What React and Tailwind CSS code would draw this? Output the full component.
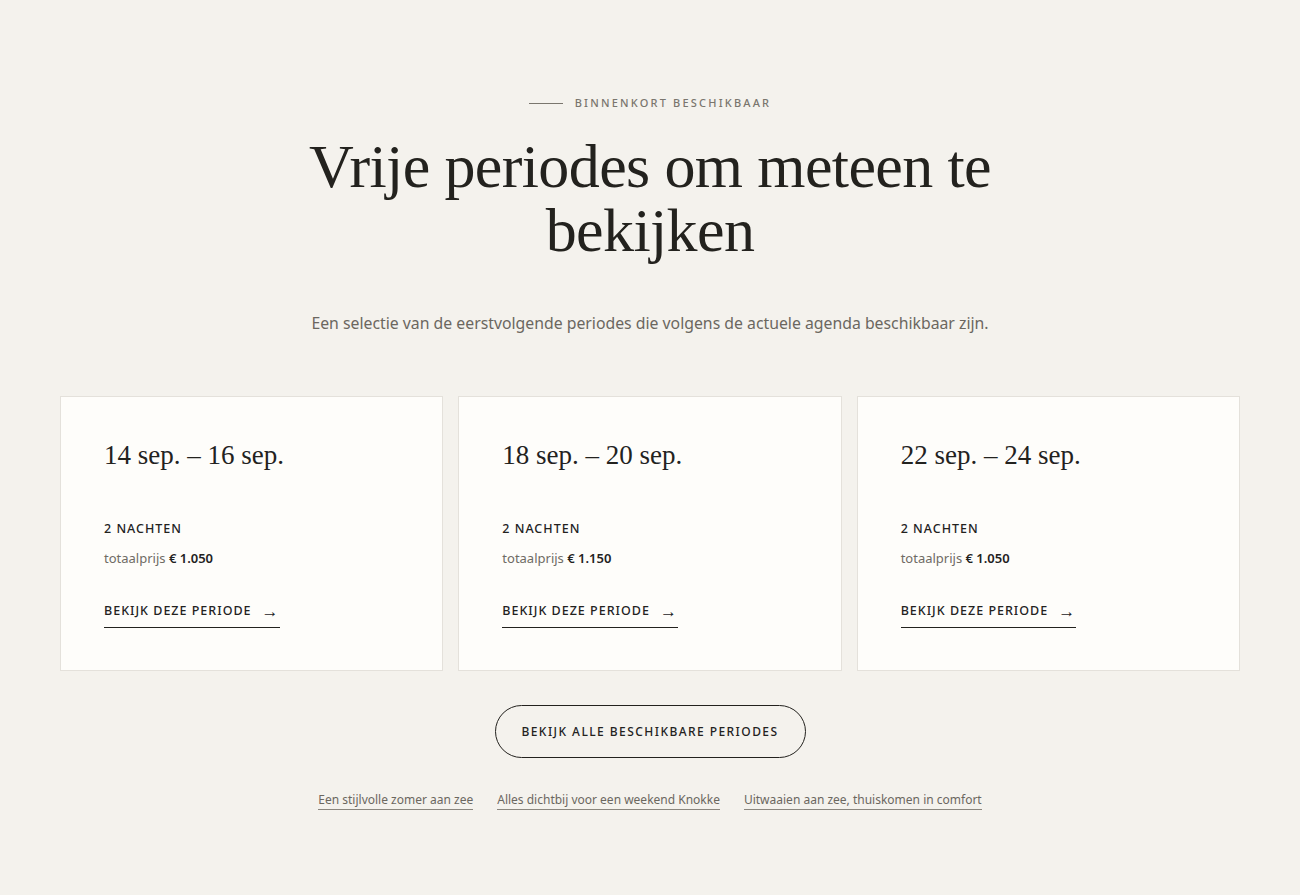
import React from 'react';

const PERIODS = [
  { id: 1, range: '14 sep. – 16 sep.', nights: '2 nachten', price: '€ 1.050' },
  { id: 2, range: '18 sep. – 20 sep.', nights: '2 nachten', price: '€ 1.150' },
  { id: 3, range: '22 sep. – 24 sep.', nights: '2 nachten', price: '€ 1.050' },
];

const LINKS = [
  'Een stijlvolle zomer aan zee',
  'Alles dichtbij voor een weekend Knokke',
  'Uitwaaien aan zee, thuiskomen in comfort',
];

const serif = { fontFamily: '"Liberation Serif", "DejaVu Serif", serif' };

const PeriodCard = ({ period }) => (
  <div className="bg-[#fefdfa] border border-[#e4e1db] px-[43px] pt-[42px] pb-[42px] flex flex-col">
    <h3 className="text-[27px] leading-[32px] text-[#23221e]" style={serif}>
      {period.range}
    </h3>
    <div className="mt-[50px] text-[12.5px] leading-[16px] font-medium uppercase tracking-[0.08em] text-[#23221e]">
      {period.nights}
    </div>
    <div className="mt-[13px] text-[13px] leading-[16px] text-[#6f6b64]">
      totaalprijs <span className="font-semibold text-[#23221e]">{period.price}</span>
    </div>
    <div className="mt-[31px]">
      <a
        href="#"
        className="inline-flex items-center gap-[10px] pb-[8px] border-b border-[#23221e] text-[12.5px] leading-[16px] font-medium uppercase tracking-[0.08em] text-[#23221e]"
      >
        Bekijk deze periode
        <span className="text-[17px] leading-[16px]">→</span>
      </a>
    </div>
  </div>
);

export default function App() {
  return (
    <div
      className="min-h-[895px] bg-[#f4f2ed] text-[#23221e]"
      style={{ fontFamily: '"Noto Sans", "Liberation Sans", sans-serif' }}
    >
      <section className="pt-[96px] pb-[80px] flex flex-col items-center">
        {/* Eyebrow */}
        <div className="flex items-center gap-[12px]">
          <span className="block w-[34px] h-px bg-[#7a766e]" />
          <span className="text-[11px] leading-[14px] font-medium uppercase tracking-[0.2em] text-[#7a766e]">
            Binnenkort beschikbaar
          </span>
        </div>

        {/* Heading */}
        <h1
          className="mt-[24px] max-w-[780px] text-center text-[62px] leading-[64px] tracking-[-0.01em] text-[#23221e]"
          style={serif}
        >
          Vrije periodes om meteen te bekijken
        </h1>

        <p className="mt-[49px] text-[15.8px] leading-[24px] text-[#6b675f]">
          Een selectie van de eerstvolgende periodes die volgens de actuele agenda beschikbaar zijn.
        </p>

        {/* Cards */}
        <div className="mt-[61px] w-[1180px] grid grid-cols-3 gap-[15px]">
          {PERIODS.map((p) => (
            <PeriodCard key={p.id} period={p} />
          ))}
        </div>

        {/* All periods button */}
        <a
          href="#"
          className="mt-[34px] w-[311px] h-[53px] rounded-full border border-[#23221e] flex items-center justify-center text-[12px] font-medium uppercase tracking-[0.12em] text-[#23221e]"
        >
          Bekijk alle beschikbare periodes
        </a>

        {/* Related links */}
        <div className="mt-[34px] flex items-center gap-[24px]">
          {LINKS.map((l) => (
            <a
              key={l}
              href="#"
              className="text-[12px] leading-[16px] text-[#6b675f] border-b border-[#8a867e] pb-[1px]"
            >
              {l}
            </a>
          ))}
        </div>
      </section>
    </div>
  );
}
